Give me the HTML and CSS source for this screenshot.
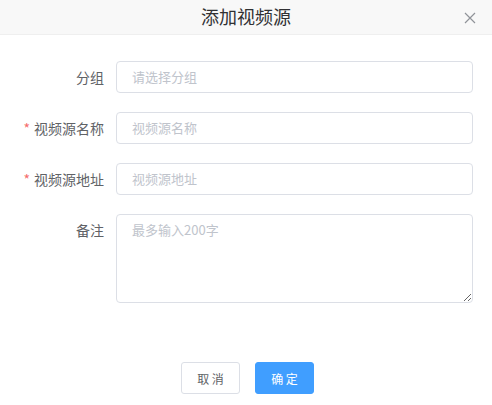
FILE: index.html
```html
<!DOCTYPE html>
<html>
<head>
<meta charset="utf-8">
<link rel="stylesheet" href="styles.css">
</head>
<body>
<div class="dialog">
  <div class="header">
    <span class="title">添加视频源</span>
    <span class="close" aria-label="close">
      <svg width="12" height="12" viewBox="0 0 12 12"><path d="M1 1L11 11M11 1L1 11" stroke="#909399" stroke-width="1.2" fill="none"/></svg>
    </span>
  </div>
  <div class="body">
    <div class="row">
      <label class="label">分组</label>
      <input class="input" placeholder="请选择分组">
    </div>
    <div class="row">
      <label class="label"><span class="req">*</span>视频源名称</label>
      <input class="input" placeholder="视频源名称">
    </div>
    <div class="row">
      <label class="label"><span class="req">*</span>视频源地址</label>
      <input class="input" placeholder="视频源地址">
    </div>
    <div class="row">
      <label class="label">备注</label>
      <textarea class="textarea" placeholder="最多输入200字"></textarea>
    </div>
  </div>
  <div class="footer">
    <button class="btn">取 消</button>
    <button class="btn primary">确 定</button>
  </div>
</div>
</body>
</html>
```

FILE: styles.css
```css
* { box-sizing: border-box; }
html, body { margin: 0; padding: 0; background: #fff; }
body {
  font-family: "Noto Sans CJK SC", "Liberation Sans", sans-serif;
  width: 492px;
  height: 405px;
  overflow: hidden;
}
.header {
  position: relative;
  height: 35px;
  background: #f8f8f8;
  border-bottom: 1px solid #efefef;
  display: flex;
  align-items: center;
  justify-content: center;
}
.title {
  font-size: 18px;
  color: #303133;
  line-height: 24px;
  margin-top: -3px;
}
.close {
  position: absolute;
  right: 16px;
  top: 12px;
  width: 12px;
  height: 12px;
  display: flex;
}
.body {
  padding: 26px 19px 0 0;
  display: flex;
  flex-direction: column;
  gap: 19px;
}
.row {
  display: flex;
  align-items: flex-start;
}
.label {
  width: 116px;
  flex: none;
  text-align: right;
  padding-right: 12px;
  font-size: 14px;
  line-height: 32px;
  color: #606266;
}
.req {
  color: #f56c6c;
  margin-right: 4px;
}
.input, .textarea {
  flex: 1;
  border: 1px solid #dcdfe6;
  border-radius: 4px;
  font-family: "Noto Sans CJK SC", "Liberation Sans", sans-serif;
  font-size: 13px;
  color: #606266;
  padding: 0 15px;
  outline: none;
  background: #fff;
}
.input {
  height: 32px;
  line-height: 32px;
}
.textarea {
  height: 89px;
  padding: 5px 15px;
  line-height: 1.5;
  resize: vertical;
}
.input::placeholder, .textarea::placeholder {
  color: #c0c4cc;
}
.footer {
  margin-top: 59px;
  display: flex;
  justify-content: center;
  gap: 15px;
  padding-left: 3px;
}
.btn {
  width: 59px;
  height: 32px;
  border: 1px solid #dcdfe6;
  border-radius: 3px;
  background: #fff;
  color: #606266;
  font-family: "Noto Sans CJK SC", "Liberation Sans", sans-serif;
  font-size: 12px;
  padding: 0;
  cursor: pointer;
}
.btn.primary {
  background: #409eff;
  border-color: #409eff;
  color: #fff;
}
```
